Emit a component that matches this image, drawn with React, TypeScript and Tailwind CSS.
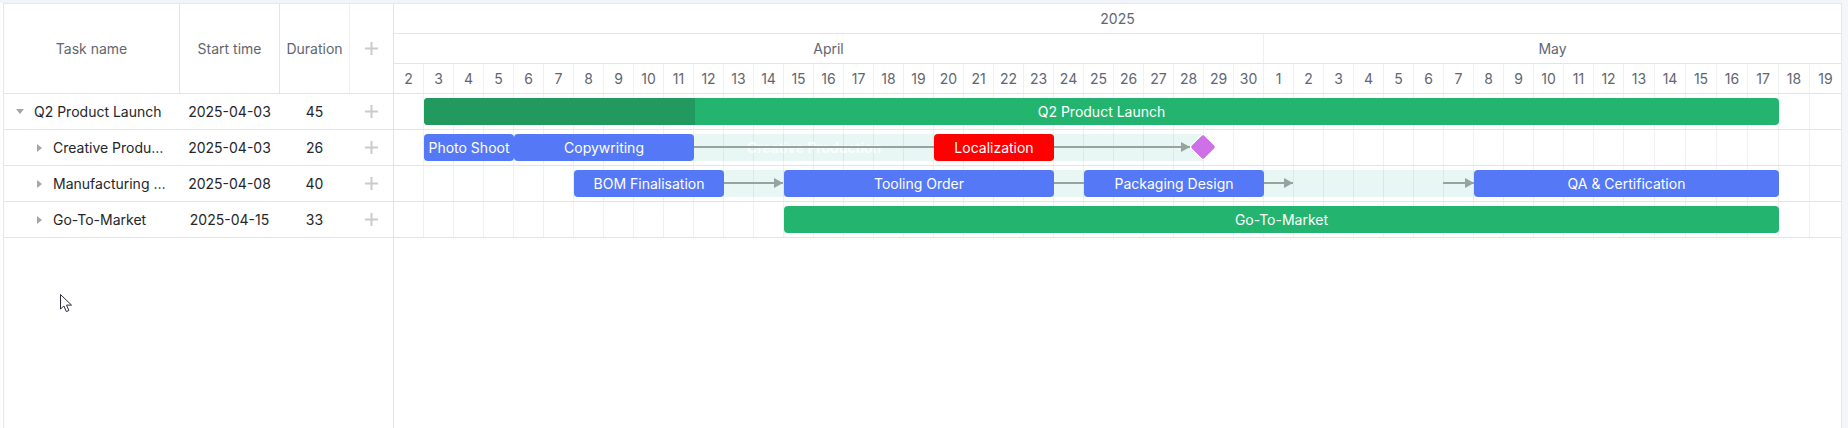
const DAYS = [
  ...Array.from({ length: 29 }, (_, i) => ({ day: i + 2, wide: false })),
  ...Array.from({ length: 19 }, (_, i) => ({ day: i + 1, wide: i + 1 >= 13 })),
];

// cells are 30px wide, the last seven (May 13 on) are 31px
const dayX = (i: number) => i * 30 + Math.max(0, i - 41);

type Bar = { from: number; to: number; label?: string; color: string; progressTo?: number };
type Link = { from: number; to: number; head?: boolean };

const ROWS: {
  name: string;
  start: string;
  duration: number;
  open?: boolean;
  level: number;
  shade?: { from: number; to: number; label?: string };
  links?: Link[];
  bars: Bar[];
  milestone?: number;
}[] = [
  {
    name: "Q2 Product Launch",
    start: "2025-04-03",
    duration: 45,
    open: true,
    level: 0,
    bars: [{ from: 1, to: 46, label: "Q2 Product Launch", color: "bg-[#23b56f]", progressTo: 271 }],
  },
  {
    name: "Creative Production",
    start: "2025-04-03",
    duration: 26,
    level: 1,
    shade: { from: 1, to: 27, label: "Creative Production" },
    links: [
      { from: 300, to: 540 },
      { from: 660, to: 796, head: true },
    ],
    bars: [
      { from: 1, to: 4, label: "Photo Shoot", color: "bg-[#5478f6]" },
      { from: 4, to: 10, label: "Copywriting", color: "bg-[#5478f6]" },
      { from: 18, to: 22, label: "Localization", color: "bg-[#ff0000]" },
    ],
    milestone: 27,
  },
  {
    name: "Manufacturing Production",
    start: "2025-04-08",
    duration: 40,
    level: 1,
    shade: { from: 6, to: 36 },
    links: [
      { from: 330, to: 389, head: true },
      { from: 660, to: 690 },
      { from: 870, to: 899, head: true },
      { from: 1049, to: 1080, head: true },
    ],
    bars: [
      { from: 6, to: 11, label: "BOM Finalisation", color: "bg-[#5478f6]" },
      { from: 13, to: 22, label: "Tooling Order", color: "bg-[#5478f6]" },
      { from: 23, to: 29, label: "Packaging Design", color: "bg-[#5478f6]" },
      { from: 36, to: 46, label: "QA & Certification", color: "bg-[#5478f6]" },
    ],
  },
  {
    name: "Go-To-Market",
    start: "2025-04-15",
    duration: 33,
    level: 1,
    bars: [{ from: 13, to: 46, label: "Go-To-Market", color: "bg-[#23b56f]" }],
  },
];

const AddIcon = () => (
  <svg width="13" height="13" viewBox="0 0 13 13" className="text-[#c9cbcd]">
    <path d="M6.5 0v13M0 6.5h13" stroke="currentColor" strokeWidth="2" />
  </svg>
);

const Caret = ({ open }: { open?: boolean }) =>
  open ? (
    <svg width="8" height="5" viewBox="0 0 8 5" className="text-[#a3a5a8]">
      <path d="M0 0h8L4 5z" fill="currentColor" />
    </svg>
  ) : (
    <svg width="5" height="8" viewBox="0 0 5 8" className="text-[#a3a5a8]">
      <path d="M0 0l5 4-5 4z" fill="currentColor" />
    </svg>
  );

const GridCells = ({ header }: { header?: boolean }) => (
  <>
    {DAYS.map((d, i) => (
      <div
        key={i}
        className={`h-full shrink-0 flex items-center justify-center ${d.wide ? "w-[31px]" : "w-[30px]"} ${
          i === DAYS.length - 1 ? "" : "border-r border-[#eef0f2]"
        }`}
      >
        {header ? d.day : null}
      </div>
    ))}
  </>
);

export default function App() {
  return (
    <div className="h-[428px] w-[1848px] overflow-hidden bg-[#fdfefe] pt-[3px] pl-[3px] pr-[6px] font-['Inter',sans-serif] text-[14px] relative">
      <div className="absolute inset-x-0 top-0 h-[3px] bg-[#f1f4f8]" />
      <div className="absolute inset-y-0 right-0 w-[6px] bg-[#f3f6fa]" />
      <div className="h-[425px] flex border-t border-l border-r border-[#e4e7eb] bg-white">
        <div className="w-[390px] shrink-0 border-r border-[#e2e4e6] flex flex-col">
          <div className="h-[90px] flex border-b border-[#e2e4e6] text-[#5f6670]">
            <div className="w-[176px] flex items-center justify-center border-r border-[#e2e4e6]">Task name</div>
            <div className="w-[100px] flex items-center justify-center border-r border-[#e2e4e6]">Start time</div>
            <div className="w-[70px] flex items-center justify-center border-r border-[#eef0f2]">Duration</div>
            <div className="flex-1 flex items-center justify-center">
              <AddIcon />
            </div>
          </div>
          {ROWS.map((row) => (
            <div key={row.name} className="h-[36px] flex items-center border-b border-[#e2e4e6] text-[#24262a]">
              <div className={`w-[176px] flex items-center ${row.level ? "pl-[33px]" : "pl-[12px]"}`}>
                <div className={`flex ${row.level ? "w-[16px]" : "w-[18px]"}`}>
                  <Caret open={row.open} />
                </div>
                <span className={`truncate ${row.level ? "w-[118px]" : "w-[140px]"}`}>{row.name}</span>
              </div>
              <div className="w-[99px] text-center">{row.start}</div>
              <div className="w-[71px] text-center">{row.duration}</div>
              <div className="flex-1 flex justify-center">
                <AddIcon />
              </div>
            </div>
          ))}
        </div>

        <div className="flex-1 flex flex-col text-[#5f6670]">
          <div className="h-[30px] flex items-center justify-center border-b border-[#e2e4e6]">2025</div>
          <div className="h-[30px] flex border-b border-[#e2e4e6]">
            <div className="w-[870px] flex items-center justify-center border-r border-[#eef0f2]">April</div>
            <div className="flex-1 flex items-center justify-center">May</div>
          </div>
          <div className="h-[30px] flex border-b border-[#e2e4e6]">
            <GridCells header />
          </div>
          {ROWS.map((row) => (
            <div key={row.name} className="h-[36px] relative flex border-b border-[#e2e4e6] text-white">
              <GridCells />
              {row.shade && (
                <div
                  className="absolute top-[4px] h-[27px] bg-[#1fae8e]/10 flex items-center justify-center text-white/80 font-semibold"
                  style={{ left: dayX(row.shade.from), width: dayX(row.shade.to) - dayX(row.shade.from) }}
                >
                  {row.shade.label}
                </div>
              )}
              {row.links?.map((l) => (
                <div
                  key={l.from}
                  className="absolute top-[16px] h-[2px] bg-[#98a39e]"
                  style={{ left: l.from, width: l.to - l.from }}
                >
                  {l.head && (
                    <div className="absolute right-0 top-[-4px] border-y-[5px] border-l-[9px] border-y-transparent border-l-[#98a39e]" />
                  )}
                </div>
              ))}
              {row.bars.map((b) => (
                <div
                  key={b.from}
                  className={`absolute top-[4px] h-[27px] rounded-[4px] overflow-hidden flex items-center justify-center ${b.color}`}
                  style={{ left: dayX(b.from), width: dayX(b.to) - dayX(b.from) }}
                >
                  {b.progressTo && (
                    <div className="absolute inset-y-0 left-0 bg-[#21995f]" style={{ width: b.progressTo }} />
                  )}
                  <span className="relative whitespace-nowrap">{b.label}</span>
                </div>
              ))}
              {row.milestone && (
                <div
                  className="absolute top-[8px] w-[18px] h-[18px] -ml-[9px] rotate-45 rounded-[2px] bg-[#d070e8] outline outline-1 outline-white"
                  style={{ left: dayX(row.milestone) - 1 }}
                />
              )}
            </div>
          ))}
        </div>
      </div>

      {/* mouse pointer caught in the screenshot */}
      <svg width="14" height="20" viewBox="0 0 14 20" className="absolute left-[60px] top-[294px]">
        <path
          d="M.5.5v14.5l3.4-3 2.4 5.6 2.6-1.1-2.4-5.400h5z"
          fill="white"
          stroke="#2a2f3a"
          strokeWidth="1"
          strokeLinejoin="round"
        />
      </svg>
    </div>
  );
}
